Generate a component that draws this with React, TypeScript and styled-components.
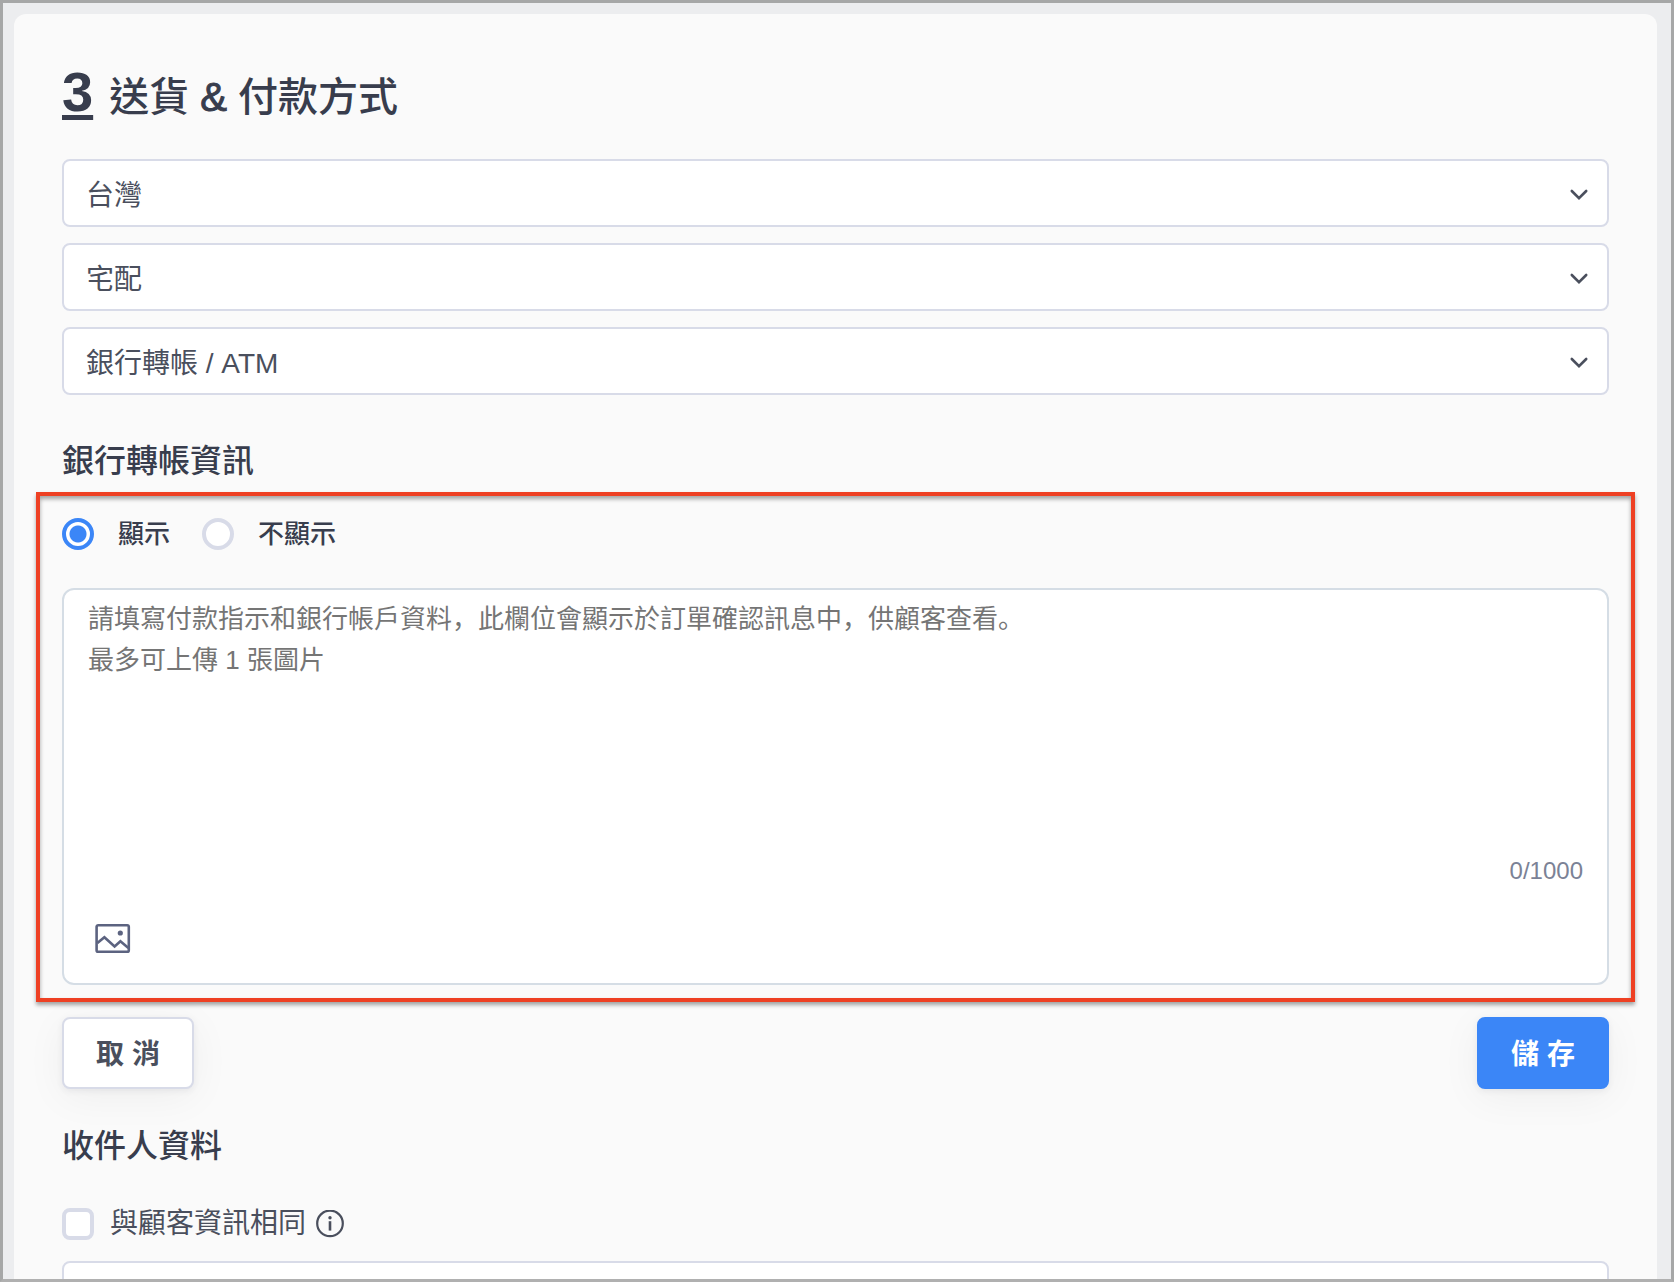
import React, { useState } from 'react';
import styled, { createGlobalStyle, css } from 'styled-components';

const fontStack = `"Liberation Sans", "Noto Sans CJK TC", sans-serif`;

const color = {
  heading: '#383d4d',
  text: '#4a4f5d',
  muted: '#7b8296',
  placeholder: '#757575',
  line: '#d8dbe8',
  softLine: '#d5dde5',
  primary: '#3b86f7',
  icon: '#5c6380',
  marker: '#ee4023',
};

const GlobalStyle = createGlobalStyle`
  *, *::before, *::after { box-sizing: border-box; }
  body { margin: 0; background: #ecedef; }
  button, input, select, textarea { font: inherit; color: inherit; margin: 0; }
`;

const Frame = styled.div`
  height: 100vh;
  overflow: hidden;
  border: 3px solid #a6a7a7;
  border-bottom-color: #b0b0b0;
  padding: 11px 14px 0 11px;
  background: #ecedef;
  font-family: ${fontStack};
  color: ${color.text};
`;

const Card = styled.main`
  padding: 46px 48px;
  border-radius: 12px;
  background: #fafafa;
`;

const StepHeading = styled.h1`
  display: flex;
  align-items: baseline;
  gap: 16px;
  margin: 0 0 35px;
  color: ${color.heading};
  font-size: 40px;
  line-height: 48px;
  font-weight: 500;
`;

const StepNumber = styled.span`
  font-size: 56px;
  line-height: 64px;
  font-weight: 700;
  text-decoration: underline;
  text-decoration-thickness: 5px;
  text-underline-offset: 4px;
  text-decoration-skip-ink: none;
`;

const Ampersand = styled.span`
  -webkit-text-stroke: 1px currentColor;
`;

const FieldStack = styled.div`
  display: grid;
  gap: 16px;
`;

const fieldBox = css`
  width: 100%;
  height: 68px;
  border: 2px solid ${color.line};
  border-radius: 8px;
  background: #fff;
  padding: 4px 22px 0;
  font-size: 28px;
`;

const SelectWrap = styled.div`
  display: grid;
  align-items: center;

  > * { grid-area: 1 / 1; }
`;

const Select = styled.select`
  ${fieldBox}
  appearance: none;
`;

const Chevron = styled.svg`
  justify-self: end;
  margin: 2px 20px 0 0;
  pointer-events: none;
`;

const TextInput = styled.input`
  ${fieldBox}
  display: block;
`;

const SectionTitle = styled.h2<{ $top: number; $bottom: number }>`
  margin: ${(p) => p.$top}px 0 ${(p) => p.$bottom}px;
  color: ${color.heading};
  font-size: 32px;
  line-height: 48px;
  font-weight: 500;
`;

const Highlight = styled.section`
  margin: 0 -26px 15px;
  padding: 22px 22px 13px;
  border: 4px solid ${color.marker};
  box-shadow: 0 3px 4px rgba(0, 0, 0, 0.35), inset 0 3px 4px rgba(0, 0, 0, 0.35);
`;

const RadioRow = styled.div`
  display: flex;
  gap: 32px;
  margin-bottom: 38px;
`;

const RadioLabel = styled.label`
  display: flex;
  align-items: center;
  gap: 24px;
  color: ${color.heading};
  font-size: 26px;
  line-height: 32px;
  font-weight: 500;
`;

const Radio = styled.input`
  appearance: none;
  width: 32px;
  height: 32px;
  border: 4px solid ${color.line};
  border-radius: 50%;
  background: #fff;

  &:checked {
    border-color: ${color.primary};
    background: radial-gradient(circle, ${color.primary} 8px, #fff 9px);
  }
`;

const Editor = styled.div`
  border: 2px solid ${color.softLine};
  border-radius: 12px;
  background: #fff;
  overflow: hidden;
`;

const Message = styled.textarea`
  display: block;
  width: 100%;
  height: 263px;
  padding: 9px 24px;
  border: 0;
  outline: 0;
  resize: none;
  background: transparent;
  font-family: "Liberation Sans", "Noto Sans CJK SC", sans-serif;
  font-size: 26px;
  line-height: 41px;

  &::placeholder { color: ${color.placeholder}; opacity: 1; }
`;

const Counter = styled.div`
  padding: 0 24px;
  text-align: right;
  color: ${color.muted};
  font-size: 24px;
  line-height: 36px;
`;

const Toolbar = styled.div`
  display: flex;
  padding: 31px 31px 27px;
`;

const IconButton = styled.button`
  display: flex;
  padding: 0;
  border: 0;
  background: none;
  color: ${color.icon};
`;

const Actions = styled.div`
  display: flex;
  justify-content: space-between;
`;

const ActionButton = styled.button<{ $primary?: boolean }>`
  width: 132px;
  height: 72px;
  padding: 0 0 2px;
  border: 2px solid ${(p) => (p.$primary ? color.primary : color.line)};
  border-radius: 8px;
  background: ${(p) => (p.$primary ? color.primary : '#fff')};
  color: ${(p) => (p.$primary ? '#fff' : color.text)};
  font-size: 28px;
  font-weight: 700;
  box-shadow: 0 2px 6px rgba(60, 66, 90, 0.08), 0 8px 40px rgba(0, 0, 0, 0.05);
`;

const CheckRow = styled.div`
  display: flex;
  align-items: center;
  gap: 10px;
  margin-bottom: 21px;
`;

const CheckLabel = styled.label`
  display: flex;
  align-items: center;
  gap: 16px;
  font-size: 28px;
  line-height: 32px;
`;

const Checkbox = styled.input`
  appearance: none;
  width: 32px;
  height: 32px;
  border: 4px solid ${color.line};
  border-radius: 8px;
  background: #fff;

  &:checked { background: ${color.primary}; }
`;

function SelectField({ label, options }: { label: string; options: string[] }) {
  return (
    <SelectWrap>
      <Select aria-label={label}>
        {options.map((o) => (
          <option key={o}>{o}</option>
        ))}
      </Select>
      <Chevron width="20" height="20" viewBox="0 0 20 20" fill="none" stroke={color.text} strokeWidth="2.6" strokeLinecap="round" aria-hidden="true">
        <path d="M2.8 7 10 14.2 17.2 7" />
      </Chevron>
    </SelectWrap>
  );
}

function ImageIcon() {
  return (
    <svg width="36" height="36" viewBox="0 0 36 36" fill="none" stroke="currentColor" strokeWidth="2.6" aria-hidden="true">
      <rect x="1.6" y="5.2" width="32.2" height="26.6" rx="1.6" />
      <path d="M2.4 23 9.4 17.2 19.6 26.4 25.4 21.2 33.4 28" />
      <circle cx="25.3" cy="13" r="2.6" fill="currentColor" stroke="none" />
    </svg>
  );
}

function InfoIcon() {
  return (
    <svg width="28" height="28" viewBox="0 0 28 28" fill="none" stroke="currentColor" strokeWidth="2.2" aria-hidden="true">
      <circle cx="14" cy="13.4" r="12.8" />
      <path d="M14 11.2v9.4" strokeWidth="2.6" />
      <circle cx="14" cy="7.8" r="1.7" fill="currentColor" stroke="none" />
    </svg>
  );
}

export default function App() {
  const [visible, setVisible] = useState(true);
  const [message, setMessage] = useState('');

  return (
    <>
      <GlobalStyle />
      <Frame lang="zh-Hant">
        <Card>
          <StepHeading>
            <StepNumber>3</StepNumber>
            <span>
              送貨 <Ampersand>&amp;</Ampersand> 付款方式
            </span>
          </StepHeading>

          <FieldStack>
            <SelectField label="國家" options={['台灣']} />
            <SelectField label="送貨方式" options={['宅配']} />
            <SelectField label="付款方式" options={['銀行轉帳 / ATM']} />
          </FieldStack>

          <SectionTitle $top={42} $bottom={7}>銀行轉帳資訊</SectionTitle>

          <Highlight>
            <RadioRow>
              <RadioLabel>
                <Radio type="radio" name="visibility" checked={visible} onChange={() => setVisible(true)} />
                顯示
              </RadioLabel>
              <RadioLabel>
                <Radio type="radio" name="visibility" checked={!visible} onChange={() => setVisible(false)} />
                不顯示
              </RadioLabel>
            </RadioRow>
            <Editor>
              <Message
                lang="zh-Hans"
                aria-label="銀行轉帳資訊"
                maxLength={1000}
                value={message}
                onChange={(e) => setMessage(e.target.value)}
                placeholder={'請填寫付款指示和銀行帳戶資料，此欄位會顯示於訂單確認訊息中，供顧客查看。\n最多可上傳 1 張圖片'}
              />
              <Counter>{message.length}/1000</Counter>
              <Toolbar>
                <IconButton type="button" aria-label="上傳圖片">
                  <ImageIcon />
                </IconButton>
              </Toolbar>
            </Editor>
          </Highlight>

          <Actions>
            <ActionButton type="button">取 消</ActionButton>
            <ActionButton type="button" $primary>儲 存</ActionButton>
          </Actions>

          <SectionTitle $top={33} $bottom={38}>收件人資料</SectionTitle>
          <CheckRow>
            <CheckLabel>
              <Checkbox type="checkbox" />
              與顧客資訊相同
            </CheckLabel>
            <InfoIcon />
          </CheckRow>
          <TextInput type="text" aria-label="收件人名稱" />
        </Card>
      </Frame>
    </>
  );
}
